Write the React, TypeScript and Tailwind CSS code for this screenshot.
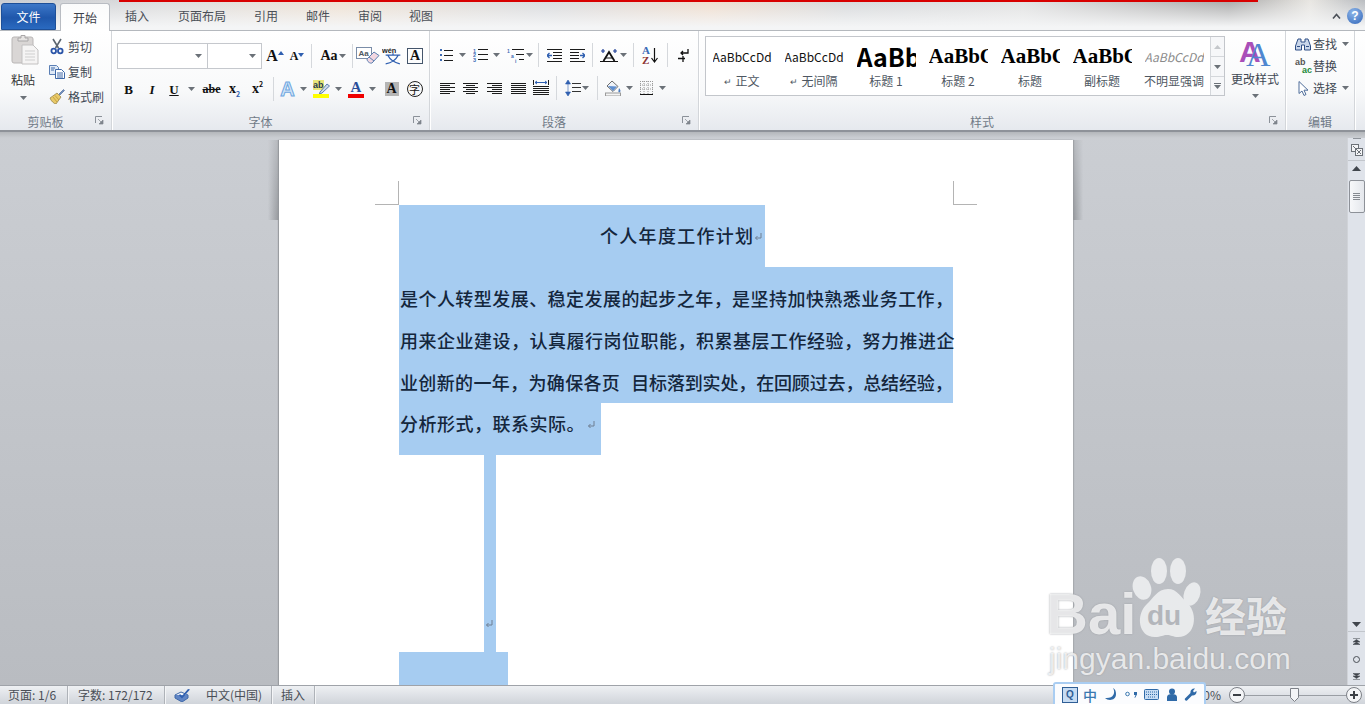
import type { ReactNode } from 'react';

const cjk = { fontFamily: '"Noto Sans CJK SC", "Liberation Sans", sans-serif' };
const serif = { fontFamily: '"Liberation Serif", serif' };

function Caret({ className = '' }: { className?: string }) {
  return (
    <svg width="7" height="4" viewBox="0 0 7 4" className={className}>
      <path d="M0 0h7L3.5 4z" fill="#6b7178" />
    </svg>
  );
}

function Divider({ className = 'h-[24px]' }: { className?: string }) {
  return <div className={`w-px bg-[#d5d8dc] ${className}`} />;
}

function Launcher() {
  return (
    <svg width="9" height="9" viewBox="0 0 9 9" className="absolute right-[7px] top-[7px]">
      <path d="M.5 7V.5H7" fill="none" stroke="#8b9199" />
      <path d="M3 3l4 4M8 4v4H4z" fill="#7f858d" stroke="#7f858d" strokeWidth=".7" />
    </svg>
  );
}

function Group({ label, className, launcher, children }: { label: string; className: string; launcher?: boolean; children: ReactNode }) {
  return (
    <div className={`flex flex-col border-r border-[#d3d6da] shadow-[1px_0_0_#ffffff] ${className}`}>
      <div className="flex-1 min-h-0">{children}</div>
      <div className={`relative h-[21px] pt-[4px] flex items-center justify-center text-[12px] leading-none text-[#707a87] ${launcher ? 'pr-[20px]' : ''}`}>
        {label}
        {launcher && <Launcher />}
      </div>
    </div>
  );
}

function Tab({ label, className }: { label: string; className: string }) {
  return <div className={`flex items-center justify-center text-[12px] text-[#4a4f57] ${className}`}>{label}</div>;
}

function Cell({ className, children }: { className: string; children: ReactNode }) {
  return <div className={`flex items-center justify-center shrink-0 ${className}`}>{children}</div>;
}

const L = ({ d, c = '#1c1c1c' }: { d: string; c?: string }) => <path d={d} fill="none" stroke={c} strokeWidth="1" shapeRendering="crispEdges" />;

function PasteIcon() {
  return (
    <svg width="28" height="32" viewBox="0 0 28 32">
      <rect x="1" y="3" width="21" height="26" rx="2" fill="#d9d6d5" stroke="#b9b6b6" />
      <path d="M7 4h3V1.5h4V4h3v3H7z" fill="#e6e4e3" stroke="#a9a7a8" />
      <path d="M11 11h11l5 5v14H11z" fill="#f5f4f4" stroke="#c2c1c1" />
      <path d="M14 17h10M14 20h10M14 23h10M14 26h10" stroke="#cfcfcf" />
    </svg>
  );
}

function ScissorsIcon() {
  return (
    <svg width="14" height="17" viewBox="0 0 14 17">
      <path d="M3 1l5.5 9M11 1L5.5 10" stroke="#5c6670" strokeWidth="1.6" />
      <circle cx="3.7" cy="13" r="2.3" fill="none" stroke="#2b55a8" strokeWidth="1.8" />
      <circle cx="10.3" cy="13" r="2.3" fill="none" stroke="#2b55a8" strokeWidth="1.8" />
    </svg>
  );
}

function CopyIcon() {
  return (
    <svg width="16" height="14" viewBox="0 0 16 14">
      <path d="M.5.5h7l2 2v7H.5z" fill="#dfe9f6" stroke="#5b7fb5" />
      <path d="M6.5 4.5h6l3 3v6h-9z" fill="#ffffff" stroke="#3e68a8" />
      <path d="M8 8h6M8 10h6M8 12h6M2 3h4M2 5h3" stroke="#3e68a8" />
    </svg>
  );
}

function BrushIcon() {
  return (
    <svg width="16" height="15" viewBox="0 0 16 15">
      <path d="M10 5l4.5-4.5 1 1L11 6z" fill="#6f8fc2" stroke="#4a6591" strokeWidth=".6" />
      <path d="M1 9l7-5 4 4-5 7c-2-.2-5-3-6-6z" fill="#e9c968" stroke="#8f7d44" strokeWidth=".7" />
      <path d="M4 8l4 5M6 6.500l4 4.500" stroke="#b49335" strokeWidth=".7" />
    </svg>
  );
}

function ClearFormatIcon() {
  return (
    <svg width="25" height="18" viewBox="0 0 25 18">
      <rect x=".5" y=".5" width="15" height="11" fill="#ffffff" stroke="#7a8da8" />
      <text x="2.500" y="9" fontSize="8" fontFamily="Liberation Sans" fontWeight="700" fill="#4f5862">Aa</text>
      <path d="M11 12l7-7 5 3.500-7 7.500c-2 .8-5-1.500-5-4z" fill="#f2d7e1" stroke="#5a7fb0" />
      <path d="M13 10l5 4" stroke="#5a7fb0" />
    </svg>
  );
}

function WenIcon() {
  return (
    <svg width="24" height="20" viewBox="0 0 24 20">
      <text x="0" y="6.500" fontSize="8" fontWeight="700" fontFamily="Liberation Sans" fill="#222">wén</text>
      <path d="M12 7v2M4 9h16M6.500 9.500c2 4 6 7.500 13 9M17.500 9.500c-2 4-7 8-13.500 9" fill="none" stroke="#2f5fb0" strokeWidth="1.400" />
    </svg>
  );
}

function HighlightIcon() {
  return (
    <svg width="17" height="18" viewBox="0 0 17 18">
      <rect x="0" y="0" width="11" height="10" fill="#e8e57a" />
      <text x="0" y="8" fontSize="9" fontFamily="Liberation Sans" fontWeight="700" fill="#26384f">ab</text>
      <path d="M7 12l7-8 2.500 2-7.500 7-2.500 1z" fill="#cfd9e8" stroke="#5a7fb0" />
      <rect x="0" y="14" width="16" height="4" fill="#ffff00" />
    </svg>
  );
}

function CircleWord() {
  return (
    <div className="w-[16px] h-[16px] rounded-full border-[1.5px] border-[#222] flex items-center justify-center text-[11px] leading-none text-[#111]">字</div>
  );
}

function BulletsIcon() {
  return (
    <svg width="14" height="13" viewBox="0 0 14 13">
      <path d="M1 0h2v2H1zM1 5h2v2H1zM1 10h2v2H1z" fill="#3f6cb5" />
      <L d="M5 1.500h9M5 6.500h9M5 11.500h9" />
    </svg>
  );
}

function NumbersIcon() {
  return (
    <svg width="15" height="14" viewBox="0 0 15 14">
      <g fontSize="5.500" fontFamily="Liberation Sans" fontWeight="700" fill="#3f6cb5">
        <text x="0" y="4.500">1</text>
        <text x="0" y="9">2</text>
        <text x="0" y="13.500">3</text>
      </g>
      <L d="M5 1.500h10M5 6.500h10M5 11.500h10" />
    </svg>
  );
}

function MultiIcon() {
  return (
    <svg width="18" height="15" viewBox="0 0 18 15">
      <g fontSize="5" fontFamily="Liberation Sans" fontWeight="700" fill="#3f6cb5">
        <text x="0" y="5">1</text>
        <text x="4" y="10">a</text>
        <text x="8" y="15">i</text>
      </g>
      <L d="M5 1.500h12M9 6.500h8M12 11.500h5" />
    </svg>
  );
}

function IndentIcon({ flip }: { flip?: boolean }) {
  return (
    <svg width="16" height="13" viewBox="0 0 16 13" className={flip ? '-scale-x-100' : ''}>
      <L d="M0 .5h15M6 3.500h9M6 6.500h9M6 9.500h9M0 12.500h15" />
      <path d="M5 6.500H0M2.500 4L0 6.500 2.500 9" fill="none" stroke="#2f5fb0" strokeWidth="1.300" />
    </svg>
  );
}

function AsianIcon() {
  return (
    <svg width="18" height="13" viewBox="0 0 18 13">
      <path d="M3.500 12L9 3l5.500 9" fill="none" stroke="#111" strokeWidth="1.800" />
      <path d="M0 12.500h18M6 9h6" stroke="#111" />
      <path d="M1 2h4M3 0v4M13 2h4M15 0v4" stroke="#1f3f96" strokeWidth="1.200" />
    </svg>
  );
}

function SortIcon() {
  return (
    <div className="flex items-center gap-[1px]">
      <div className="flex flex-col text-[11px] leading-[10px] font-bold" style={serif}>
        <span className="text-[#3a6ab6]">A</span>
        <span className="text-[#8c3333]">Z</span>
      </div>
      <svg width="7" height="15" viewBox="0 0 7 15">
        <path d="M3.500 0v13M.5 10l3 4 3-4" fill="none" stroke="#111" strokeWidth="1.200" />
      </svg>
    </div>
  );
}

function MarksIcon() {
  return (
    <svg width="11" height="14" viewBox="0 0 11 14">
      <path d="M10 1v4H3M5 3L3 5l2 2" fill="none" stroke="#111" strokeWidth="1.300" />
      <path d="M0 10.500h7M5 8v6" stroke="#111" strokeWidth="1.300" />
    </svg>
  );
}

function AlignIcon({ d }: { d: string }) {
  return (
    <svg width="15" height="11" viewBox="0 0 15 11">
      <L d={d} />
    </svg>
  );
}

function DistributeIcon() {
  return (
    <svg width="16" height="16" viewBox="0 0 16 16">
      <L d="M.5 0v5M15.500 0v5" />
      <path d="M2 2.500h12M4 1l-2 1.500L4 4M12 1l2 1.500L12 4" fill="none" stroke="#2f5fb0" />
      <L d="M0 6.500h16M0 8.500h16M0 10.500h16M0 12.500h16M0 14.500h16" />
    </svg>
  );
}

function LineSpaceIcon() {
  return (
    <svg width="16" height="16" viewBox="0 0 16 16">
      <path d="M3 0l2.500 4h-5zM3 16l2.500-4h-5zM3 4v8" fill="#2f5fb0" stroke="#2f5fb0" strokeWidth=".6" />
      <L d="M7 3.500h9M7 7.500h9M7 11.500h9" c="#333" />
    </svg>
  );
}

function FillIcon() {
  return (
    <svg width="17" height="16" viewBox="0 0 17 16">
      <path d="M7 1l6 5.500-5 5-6-5.500z" fill="#eef2f8" stroke="#6d6d6d" />
      <path d="M3 6l9 .500-4 4.500z" fill="#5f8fd0" />
      <path d="M14 8c1.500 2 2 3 1 4s-2 0-1.500-1.500z" fill="#4a7cc0" />
      <rect x=".5" y="13" width="15" height="3" fill="#f4f4f4" stroke="#9a9a9a" />
    </svg>
  );
}

function BorderIcon() {
  return (
    <svg width="13" height="14" viewBox="0 0 13 14">
      <path d="M.5 0v13M4 0v13M8 0v13M12.500 0v13M0 .5h13M0 4h13M0 8h13" stroke="#9a9a9a" strokeDasharray="1 1" fill="none" />
      <path d="M0 13.500h13" stroke="#111" />
    </svg>
  );
}

function ChangeStyleIcon() {
  return (
    <svg width="32" height="28" viewBox="0 0 32 28">
      <text x="0" y="24" fontSize="30" fontWeight="700" fontFamily="Liberation Sans" fill="#a94fb8">A</text>
      <text x="7" y="28" fontSize="34" fontFamily="Liberation Serif" fill="#4f86d0">A</text>
    </svg>
  );
}

function BinocularsIcon() {
  return (
    <svg width="16" height="13" viewBox="0 0 16 13">
      <path d="M3 1h3v3h4V1h3l2.500 7v4h-6V7H6.500v5h-6V8z" fill="#c9d6ea" stroke="#2f4f86" />
      <path d="M2 8.500h3M11 8.500h3" stroke="#2f4f86" />
    </svg>
  );
}

function ReplaceIcon() {
  return (
    <div className="relative w-[16px] h-[16px] text-[9px] leading-[8px] font-bold" style={{ fontFamily: '"Liberation Sans", sans-serif' }}>
      <span className="block text-[#555]">ab</span>
      <span className="block pl-[7px] text-[#1f8a3a]">ac</span>
    </div>
  );
}

function CursorIcon() {
  return (
    <svg width="11" height="15" viewBox="0 0 11 15">
      <path d="M1 .5v12l3-2.500 2 4.500 2-1-2-4.300h4z" fill="#fff" stroke="#4f6d9a" />
    </svg>
  );
}

function ParaMark({ className = '' }: { className?: string }) {
  return (
    <svg width="8" height="8" viewBox="0 0 8 8" className={className}>
      <path d="M7 0v5H1.500M3.500 3L1.500 5l2 2" fill="none" stroke="#6f7f92" />
    </svg>
  );
}

function StyleItem({ sample, label, sampleClass, mark, clipped }: { sample: string; label: string; sampleClass: string; mark?: boolean; clipped?: boolean }) {
  return (
    <div className="w-[72px] shrink-0 flex flex-col items-center overflow-hidden">
      <div className={`h-[40px] w-[59px] flex items-center overflow-hidden ${clipped ? 'justify-start' : 'justify-center'}`}>
        <span className={`whitespace-nowrap ${sampleClass}`}>{sample}</span>
      </div>
      <div className="-mt-[2px] h-[12px] flex items-center gap-[3px] text-[12px] leading-none text-[#4e5762]">
        {mark && <span className="text-[9px]">↵</span>}
        {label}
      </div>
    </div>
  );
}

function ClipRow({ icon, label }: { icon: ReactNode; label: string }) {
  return (
    <div className="h-[25px] flex items-center text-[12px] leading-none text-[#3f4853]">
      <Cell className="w-[18px] ml-[2px]">{icon}</Cell>
      <span className="ml-[2px]">{label}</span>
    </div>
  );
}

function EditRow({ icon, label }: { icon: ReactNode; label: string }) {
  return (
    <div className="h-[22px] flex items-center text-[12px] leading-none text-[#3f4853]">
      <Cell className="w-[20px]">{icon}</Cell>
      <span>{label}</span>
      <Caret className="ml-[5px]" />
    </div>
  );
}

function Ribbon() {
  const letter = 'leading-none text-[#111]';
  return (
    <div className="h-[101px] shrink-0 flex border-b-2 border-[#8e9299] bg-[linear-gradient(to_bottom,#ffffff,#f8f9fa_60%,#e6e9ee)]" style={cjk}>
      <Group label="剪贴板" className="w-[112px]" launcher>
        <div className="flex pt-[3px]">
          <div className="w-[46px] pl-[11px] flex flex-col">
            <PasteIcon />
            <div className="mt-[8px] -ml-[11px] w-[46px] text-center text-[12px] leading-none text-[#333]">粘贴</div>
            <Caret className="mt-[10px] ml-[9px]" />
          </div>
          <div>
            <ClipRow icon={<ScissorsIcon />} label="剪切" />
            <ClipRow icon={<CopyIcon />} label="复制" />
            <ClipRow icon={<BrushIcon />} label="格式刷" />
          </div>
        </div>
      </Group>

      <Group label="字体" className="w-[318px]" launcher>
        <div className="pl-[5px] pt-[12px]">
          <div className="flex items-center h-[26px]">
            <div className="w-[91px] h-[26px] border border-[#c5c8cd] bg-white flex items-center justify-end pr-[5px]">
              <Caret />
            </div>
            <div className="w-[55px] h-[26px] -ml-px border border-[#c5c8cd] bg-white flex items-center justify-end pr-[5px]">
              <Caret />
            </div>
            <Cell className="w-[26px]">
              <span className={`text-[16px] font-bold ${letter}`} style={serif}>A</span>
              <svg width="6" height="4" viewBox="0 0 6 4" className="self-start mt-[3px]"><path d="M3 0l3 4H0z" fill="#2f5fb0" /></svg>
            </Cell>
            <Cell className="w-[18px]">
              <span className={`text-[12px] font-bold ${letter}`} style={serif}>A</span>
              <svg width="6" height="4" viewBox="0 0 6 4" className="self-start mt-[3px]"><path d="M0 0h6L3 4z" fill="#2f5fb0" /></svg>
            </Cell>
            <Cell className="w-[10px]"><Divider /></Cell>
            <Cell className="w-[34px] gap-[1px]">
              <span className={`text-[14px] font-bold ${letter}`} style={serif}>Aa</span>
              <Caret />
            </Cell>
            <Cell className="w-[4px]"><Divider /></Cell>
            <Cell className="w-[28px]"><ClearFormatIcon /></Cell>
            <Cell className="w-[22px]"><WenIcon /></Cell>
            <Cell className="w-[22px]">
              <div className="w-[16px] h-[16px] border border-[#44556b] flex items-center justify-center">
                <span className={`text-[14px] font-bold ${letter}`} style={serif}>A</span>
              </div>
            </Cell>
          </div>
          <div className="flex items-center h-[24px] mt-[8px]">
            <Cell className="w-[23px]"><span className={`text-[13px] font-bold ${letter}`} style={serif}>B</span></Cell>
            <Cell className="w-[24px]"><span className={`text-[13px] italic font-bold ${letter}`} style={serif}>I</span></Cell>
            <Cell className="w-[36px] gap-[9px]">
              <span className={`text-[13px] font-bold underline ${letter}`} style={serif}>U</span>
              <Caret />
            </Cell>
            <Cell className="w-[23px]"><span className={`text-[12px] font-bold line-through ${letter}`} style={serif}>abe</span></Cell>
            <Cell className="w-[23px]">
              <span className={`text-[14px] font-bold ${letter}`} style={serif}>x</span>
              <span className="text-[7px] font-bold leading-none text-[#2f5fb0] self-end translate-y-[2px]">2</span>
            </Cell>
            <Cell className="w-[23px]">
              <span className={`text-[14px] font-bold ${letter}`} style={serif}>x</span>
              <span className="text-[7px] font-bold leading-none text-[#111] self-start -translate-y-[1px]">2</span>
            </Cell>
            <Cell className="w-[8px]"><Divider /></Cell>
            <Cell className="w-[33px] gap-[5px]">
              <span className="text-[20px] leading-none font-bold text-[#d5e6f8] [-webkit-text-stroke:1px_#6ea6e0]" style={{ fontFamily: '"Liberation Sans", sans-serif' }}>A</span>
              <Caret />
            </Cell>
            <Cell className="w-[34px] gap-[5px]"><HighlightIcon /><Caret /></Cell>
            <Cell className="w-[36px] gap-[5px]">
              <div className="flex flex-col items-center w-[16px]">
                <span className="text-[15px] leading-[13px] font-bold text-[#2a4f9a]" style={serif}>A</span>
                <div className="h-[4px] w-[16px] bg-[#f00000]" />
              </div>
              <Caret />
            </Cell>
            <Cell className="w-[23px]">
              <div className="w-[14px] h-[14px] bg-[#b5b5b5] flex items-center justify-center">
                <span className={`text-[14px] font-bold ${letter}`} style={serif}>A</span>
              </div>
            </Cell>
            <Cell className="w-[23px]"><CircleWord /></Cell>
          </div>
        </div>
      </Group>

      <Group label="段落" className="w-[269px]" launcher>
        <div className="pl-[5px] pt-[15px]">
          <div className="flex items-center h-[18px]">
            <Cell className="w-[35px] gap-[6px]"><BulletsIcon /><Caret /></Cell>
            <Cell className="w-[33px] gap-[5px]"><NumbersIcon /><Caret /></Cell>
            <Cell className="w-[34px] gap-[1px]"><MultiIcon /><Caret /></Cell>
            <Cell className="w-[3px]"><Divider /></Cell>
            <Cell className="w-[22px] ml-[4px]"><IndentIcon /></Cell>
            <Cell className="w-[22px]"><IndentIcon flip /></Cell>
            <Cell className="w-[8px]"><Divider /></Cell>
            <Cell className="w-[35px] gap-[2px]"><AsianIcon /><Caret /></Cell>
            <Cell className="w-[4px]"><Divider /></Cell>
            <Cell className="w-[30px]"><SortIcon /></Cell>
            <Cell className="w-[4px]"><Divider /></Cell>
            <Cell className="w-[28px]"><MarksIcon /></Cell>
          </div>
          <div className="flex items-center h-[18px] mt-[15px]">
            <Cell className="w-[24px]"><AlignIcon d="M0 .5h15M0 2.500h10M0 4.500h15M0 6.500h10M0 8.500h15M0 10.500h10" /></Cell>
            <Cell className="w-[23px]"><AlignIcon d="M0 .5h15M3 2.500h9M0 4.500h15M3 6.500h9M0 8.500h15M3 10.500h9" /></Cell>
            <Cell className="w-[24px]"><AlignIcon d="M0 .5h15M5 2.500h10M0 4.500h15M5 6.500h10M0 8.500h15M5 10.500h10" /></Cell>
            <Cell className="w-[24px]"><AlignIcon d="M0 .5h15M0 2.500h15M0 4.500h15M0 6.500h15M0 8.500h15M0 10.500h15" /></Cell>
            <Cell className="w-[22px]"><DistributeIcon /></Cell>
            <Cell className="w-[9px]"><Divider /></Cell>
            <Cell className="w-[32px] gap-[1px]"><LineSpaceIcon /><Caret /></Cell>
            <Cell className="w-[9px]"><Divider /></Cell>
            <Cell className="w-[34px] gap-[4px]"><FillIcon /><Caret /></Cell>
            <Cell className="w-[34px] gap-[6px]"><BorderIcon /><Caret /></Cell>
          </div>
        </div>
      </Group>

      <Group label="样式" className="w-[587px]" launcher>
        <div className="flex pl-[6px] pt-[5px]">
          <div className="w-[521px] h-[60px] border border-[#c3c6cb] bg-white flex">
            <div className="flex flex-1">
              <StyleItem sample="AaBbCcDd" label="正文" mark sampleClass="text-[12px] text-[#111]" />
              <StyleItem sample="AaBbCcDd" label="无间隔" mark sampleClass="text-[12px] text-[#111]" />
              <StyleItem sample="AaBbC" label="标题 1" clipped sampleClass="text-[25px] font-bold text-black" />
              <StyleItem sample="AaBbC" label="标题 2" clipped sampleClass="text-[21px] font-bold text-black [font-family:'Liberation_Serif']" />
              <StyleItem sample="AaBbC" label="标题" clipped sampleClass="text-[21px] font-bold text-black [font-family:'Liberation_Serif']" />
              <StyleItem sample="AaBbC" label="副标题" clipped sampleClass="text-[21px] font-bold text-black [font-family:'Liberation_Serif']" />
              <StyleItem sample="AaBbCcDd" label="不明显强调" sampleClass="text-[12px] italic text-[#8a8a8a]" />
            </div>
            <div className="w-[14px] flex flex-col border-l border-[#d4d7db] bg-[#f6f7f9]">
              <Cell className="h-[20px] border-b border-[#d4d7db]"><svg width="7" height="4" viewBox="0 0 7 4"><path d="M3.500 0L7 4H0z" fill="#c4c7cb" /></svg></Cell>
              <Cell className="h-[20px] border-b border-[#d4d7db]"><Caret /></Cell>
              <Cell className="flex-1 flex-col gap-px">
                <div className="w-[7px] h-px bg-[#6b7178]" />
                <Caret />
              </Cell>
            </div>
          </div>
          <div className="w-[60px] flex flex-col items-center pt-[2px]">
            <ChangeStyleIcon />
            <div className="mt-[7px] text-[12px] leading-none text-[#3f4853] whitespace-nowrap">更改样式</div>
            <Caret className="mt-[9px]" />
          </div>
        </div>
      </Group>

      <Group label="编辑" className="w-[69px]">
        <div className="pt-[2px] pl-[7px]">
          <EditRow icon={<BinocularsIcon />} label="查找" />
          <div className="h-[22px] flex items-center text-[12px] leading-none text-[#3f4853]">
            <Cell className="w-[20px]"><ReplaceIcon /></Cell>
            <span>替换</span>
          </div>
          <EditRow icon={<CursorIcon />} label="选择" />
        </div>
      </Group>
    </div>
  );
}

function ScrollBar() {
  return (
    <div className="w-[18px] shrink-0 flex flex-col items-center bg-[#dfe3ea] border-l border-[#d0d3d8]">
      <div className="w-full h-[7px] flex justify-center pt-[6px]"><div className="w-[8px] h-px bg-[#8f949b]" /></div>
      <Cell className="w-full h-[22px] border-b border-[#c2c6cc]">
        <svg width="12" height="12" viewBox="0 0 12 12">
          <rect x=".5" y=".5" width="7" height="7" fill="#f3f4f6" stroke="#6c7178" />
          <rect x="4.500" y="4.500" width="7" height="7" fill="#f3f4f6" stroke="#6c7178" />
          <path d="M2 2l8 8M10 6l-4 4" stroke="#6c7178" />
        </svg>
      </Cell>
      <Cell className="w-full h-[15px]"><svg width="9" height="5" viewBox="0 0 9 5"><path d="M4.500 0L9 5H0z" fill="#41464d" /></svg></Cell>
      <div className="mt-[4px] w-[16px] h-[33px] rounded-[2px] border border-[#8d9198] bg-[linear-gradient(to_right,#f7f8fa,#e4e7ec)] flex flex-col items-center justify-center gap-px">
        <div className="w-[7px] h-px bg-[#858a91]" />
        <div className="w-[7px] h-px bg-[#858a91]" />
        <div className="w-[7px] h-px bg-[#858a91]" />
        <div className="w-[7px] h-px bg-[#858a91]" />
      </div>
      <div className="flex-1" />
      <Cell className="w-full h-[14px] border-b border-[#c2c6cc]"><svg width="9" height="5" viewBox="0 0 9 5"><path d="M0 0h9L4.500 5z" fill="#41464d" /></svg></Cell>
      <Cell className="w-full h-[19px]"><svg width="7" height="7" viewBox="0 0 7 7"><path d="M0 .5h7M3.500 1.500L7 4H0zM3.500 4L7 6.500H0z" fill="#41464d" stroke="#41464d" strokeWidth=".5" /></svg></Cell>
      <Cell className="w-full h-[17px]"><div className="w-[7px] h-[7px] rounded-full border border-[#4a4f56]" /></Cell>
      <Cell className="w-full h-[17px]"><svg width="7" height="7" viewBox="0 0 7 7"><path d="M0 6.500h7M3.500 5.500L7 3H0zM3.500 3L7 .5H0z" fill="#41464d" stroke="#41464d" strokeWidth=".5" /></svg></Cell>
    </div>
  );
}

const bodyLine = 'text-[18px] leading-[42px] h-[42px] font-medium text-[#14263c] whitespace-nowrap';

function Page() {
  return (
    <div className="relative w-[794px] h-full ml-[279px] mt-2 bg-white pt-[65px] pl-[120px] shadow-[-1px_0_1px_#9a9da1,1px_0_1px_#a8abaf]" style={cjk}>
      {/* crop marks */}
      <div className="absolute left-[96px] top-[41px] w-[24px] h-[24px] border-r border-b border-[#b4b4b4]" />
      <div className="absolute left-[674px] top-[41px] w-[24px] h-[24px] border-l border-b border-[#b4b4b4]" />
      {/* top page shadows */}
      <div className="absolute -left-[11px] top-0 w-[11px] h-[80px] bg-[linear-gradient(to_right,transparent,#94979b)] [mask-image:linear-gradient(to_bottom,#0006,#000)]" />
      <div className="absolute -right-[10px] top-0 w-[10px] h-[80px] bg-[linear-gradient(to_left,transparent,#94979b)] [mask-image:linear-gradient(to_bottom,#0006,#000)]" />

      <div className="w-[366px] h-[62px] bg-[#a6ccf1] flex items-start pl-[201px] pt-[9px]">
        <span className="text-[18px] leading-[42px] font-medium text-[#14263c] whitespace-nowrap tracking-[1.3px]">个人年度工作计划</span>
        <ParaMark className="mt-[19px]" />
      </div>
      <div className="w-[554px] h-[136px] bg-[#a6ccf1] pt-[10px] pl-px">
        <div className={`w-[553px] ${bodyLine} tracking-[0.45px]`}>是个人转型发展、稳定发展的起步之年，是坚持加快熟悉业务工作，</div>
        <div className={`w-[555px] ${bodyLine} tracking-[0.5px]`}>用来企业建设，认真履行岗位职能，积累基层工作经验，努力推进企</div>
        <div className={`w-[548px] ${bodyLine} flex`}>
          <span className="tracking-[0.35px]">业创新的一年，为确保各页</span>
          <span className="ml-[11px] -tracking-[0.15px]">目标落到实处，在回顾过去，总结经验，</span>
        </div>
      </div>
      <div className="w-[202px] h-[52px] bg-[#a6ccf1] pl-px flex items-start">
        <span className={`${bodyLine} -mt-px tracking-[0.5px]`}>分析形式，联系实际。</span>
        <ParaMark className="mt-[18px] ml-[2px]" />
      </div>
      <div className="ml-[85px] w-[12px] h-[197px] bg-[#a6ccf1] flex items-end pb-[24px] pl-px">
        <ParaMark />
      </div>
      <div className="w-[109px] h-[40px] bg-[#a6ccf1]" />
    </div>
  );
}

function Watermark() {
  const base = 'absolute whitespace-nowrap text-white/75 leading-none [text-shadow:0_0_2px_#9a9da2]';
  const sans = { fontFamily: '"Liberation Sans", sans-serif' };
  return (
    <div className="absolute left-[1040px] top-[550px] w-[260px] h-[130px] pointer-events-none">
      <span className={`${base} left-[6px] top-[35px] text-[58px] font-bold`} style={sans}>Bai</span>
      <svg width="76" height="84" viewBox="0 0 76 84" className="absolute left-[90px] top-[7px] opacity-80">
        <ellipse cx="12" cy="31" rx="9" ry="12" fill="#f4f5f6" transform="rotate(-20 12 31)" />
        <ellipse cx="29" cy="14" rx="8" ry="13" fill="#f4f5f6" />
        <ellipse cx="48" cy="14" rx="8" ry="13" fill="#f4f5f6" />
        <ellipse cx="62" cy="37" rx="8" ry="12" fill="#f4f5f6" transform="rotate(20 62 37)" />
        <path d="M38 32c9 0 13 8 20 15 10 9 8 33-10 33-5 0-7-2-11-2s-6 2-12 2c-17 0-19-22-9-32 8-7 11-16 22-16z" fill="#f4f5f6" />
      </svg>
      <span className="absolute left-[107px] top-[52px] text-[28px] leading-none font-bold text-[#b3b6bb] whitespace-nowrap" style={sans}>du</span>
      <span className={`${base} left-[165px] top-[44px] text-[41px] font-bold`} style={cjk}>经验</span>
      <span className={`${base} left-[9px] top-[94px] text-[30px]`} style={sans}>jingyan.baidu.com</span>
    </div>
  );
}

function StatusBar() {
  const sep = 'w-px h-[19px] bg-[#aeb2b8] shadow-[1px_0_0_#f4f5f7]';
  return (
    <div className="relative h-[19px] shrink-0 flex items-center border-t border-[#9fa3a9] bg-[linear-gradient(to_bottom,#eef0f3,#d0d4da)] text-[12px] leading-none text-[#4a4f57]" style={cjk}>
      <span className="ml-[8px] w-[59px]">页面: 1/6</span>
      <div className={sep} />
      <span className="ml-[10px] w-[86px]">字数: 172/172</span>
      <div className={sep} />
      <Cell className="w-[34px]">
        <svg width="17" height="14" viewBox="0 0 17 14">
          <path d="M1 7l6-3 7 3-6 4z" fill="#f2f5fa" stroke="#3e68a8" />
          <path d="M1 7v3l7 4 6-4V7" fill="#5f84c4" stroke="#3e68a8" />
          <path d="M6 6l2 2 6-7 2 .5-8 9-3-3z" fill="#2f5fb0" />
        </svg>
      </Cell>
      <span className="ml-[7px] w-[65px]">中文(中国)</span>
      <div className={sep} />
      <span className="ml-[9px] w-[33px]">插入</span>
      <div className={sep} />
      <div className="flex-1" />
      <span className="mr-[8px]">0%</span>
      <div className="w-[16px] h-[16px] rounded-full border border-[#7c8087] bg-[#f4f5f7] flex items-center justify-center">
        <div className="w-[8px] h-[2px] bg-[#3c4046]" />
      </div>
      <div className="relative w-[101px] h-px bg-[#9a9ea4]">
        <svg width="9" height="14" viewBox="0 0 9 14" className="absolute left-[45px] -top-[7px]">
          <path d="M.5.5h8v9L4.500 13.500.5 9.500z" fill="#f4f5f7" stroke="#7c8087" />
        </svg>
      </div>
      <div className="relative w-[16px] h-[16px] mr-[3px] rounded-full border border-[#7c8087] bg-[#f4f5f7]">
        <div className="absolute left-[3px] top-[6px] w-[8px] h-[2px] bg-[#3c4046]" />
        <div className="absolute left-[6px] top-[3px] w-[2px] h-[8px] bg-[#3c4046]" />
      </div>
      {/* IME toolbar floating over the status bar */}
      <div className="absolute left-[1053px] -top-[4px] w-[153px] h-[23px] rounded-t-[3px] border-2 border-b-0 border-[#a9cdf2] bg-[#fbfcfe] flex items-center pl-[7px] gap-[5px]">
        <div className="w-[16px] h-[16px] border border-[#2f5f96] bg-[#c7dcf3] flex items-center justify-center text-[10px] font-bold leading-none text-[#2f5f96]" style={{ fontFamily: '"Liberation Sans", sans-serif' }}>Q</div>
        <span className="text-[14px] font-medium leading-none text-[#3a78b0]">中</span>
        <svg width="13" height="13" viewBox="0 0 13 13" className="ml-[2px]"><path d="M9 0c3 5 0 11-8 10 3 3 11 3 11-4 0-3-1-5-3-6z" fill="#2f6aa8" /></svg>
        <svg width="13" height="8" viewBox="0 0 13 8" className="ml-[3px]">
          <circle cx="2.500" cy="3" r="1.800" fill="none" stroke="#3a78b0" />
          <path d="M9 1h3v2.500L10 7l-.5-.5 1-2.500H9z" fill="#2f6aa8" />
        </svg>
        <svg width="15" height="11" viewBox="0 0 15 11" className="ml-[1px]">
          <rect x=".5" y=".5" width="14" height="10" rx="1" fill="#c7dcf3" stroke="#2f6aa8" />
          <path d="M2 3h11M2 5.500h11M4 8h7" stroke="#2f6aa8" strokeDasharray="1 1" />
        </svg>
        <svg width="12" height="13" viewBox="0 0 12 13" className="ml-[2px]">
          <circle cx="6" cy="3.500" r="3" fill="#2f6aa8" />
          <path d="M1 13V9c0-2 2-3 5-3s5 1 5 3v4z" fill="#2f6aa8" />
        </svg>
        <svg width="13" height="13" viewBox="0 0 13 13" className="ml-[1px]">
          <path d="M1 10.500L6.500 5C6 2.500 8 0 11 .5L9 3l1 1.500 2.500-1.500c.5 3-2 5-4.500 4.500L3 12.500c-1.300.8-2.800-.8-2-2z" fill="#2f6aa8" />
        </svg>
      </div>
    </div>
  );
}

export default function App() {
  return (
    <div className="relative w-[1365px] h-[704px] flex flex-col overflow-hidden bg-white">
      {/* Title strip + tabs */}
      <div className="relative h-[31px] shrink-0 flex items-end border-b border-[#b4b8bd] bg-[linear-gradient(to_bottom,#ffffff00,#f4f5f6_90%),linear-gradient(to_right,#c8ccd2,#dcdcdc_12%,#efe0d0_25%,#d8dadd_40%,#f0dccb_52%,#d6d8da_62%,#e2e2e2_75%,#a8a8a8_90%,#e8e6e2_96%,#b9bcc0)]" style={cjk}>
        <div className="absolute left-[119px] top-0 w-[1139px] h-[2px] bg-[#d80000]" />
        <div className="ml-px w-[55px] h-[27px] rounded-t-[3px] border border-[#1d4f98] bg-[linear-gradient(to_bottom,#3c77c8,#1f57ab_55%,#2a6ac0)] flex items-center justify-center text-[12px] text-white">文件</div>
        <div className="ml-[4px] w-[50px] h-[28px] -mb-px rounded-t-[3px] border border-b-0 border-[#b8bcc2] bg-[linear-gradient(to_bottom,#fafbfb,#ffffff)] flex items-center justify-center text-[12px] text-[#3b4048] z-10">开始</div>
        <Tab label="插入" className="w-[54px] h-[28px]" />
        <Tab label="页面布局" className="w-[76px] h-[28px]" />
        <Tab label="引用" className="w-[52px] h-[28px]" />
        <Tab label="邮件" className="w-[52px] h-[28px]" />
        <Tab label="审阅" className="w-[52px] h-[28px]" />
        <Tab label="视图" className="w-[50px] h-[28px]" />
        <div className="flex-1" />
        <div className="h-[28px] flex items-center gap-[6px] pr-[2px]">
          <svg width="9" height="7" viewBox="0 0 9 7"><path d="M1 5.500l3.500-4 3.500 4" fill="none" stroke="#4a4f57" strokeWidth="1.600" /></svg>
          <div className="w-[16px] h-[16px] rounded-full bg-[radial-gradient(circle_at_40%_30%,#8fb7ea,#2f64b8)] flex items-center justify-center text-[12px] font-bold leading-none text-white" style={{ fontFamily: '"Liberation Sans", sans-serif' }}>?</div>
        </div>
      </div>

      <Ribbon />

      {/* Document area */}
      <div className="relative flex-1 min-h-0 flex bg-[linear-gradient(to_bottom,#cbced3,#b9bcc1)] overflow-hidden">
        <div className="absolute inset-x-0 top-0 h-[6px] bg-[linear-gradient(to_bottom,#b4b7bb,#cbced3)]" />
        <div className="flex-1 min-w-0 overflow-hidden">
          <Page />
        </div>
        <ScrollBar />
      </div>

      <StatusBar />
      <Watermark />
    </div>
  );
}
